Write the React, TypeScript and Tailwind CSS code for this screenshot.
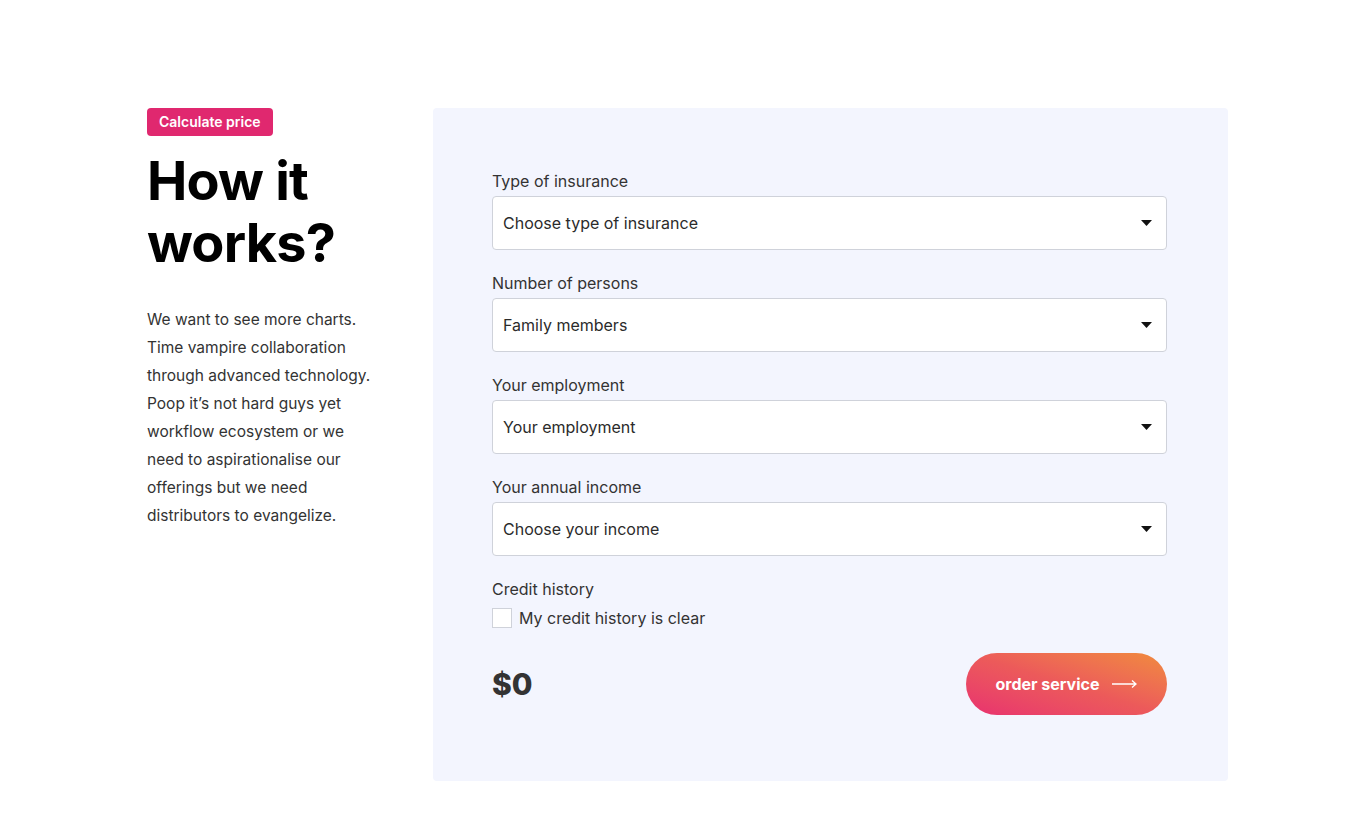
import { useState } from 'react';

const fields = [
  { label: 'Type of insurance', placeholder: 'Choose type of insurance' },
  { label: 'Number of persons', placeholder: 'Family members' },
  { label: 'Your employment', placeholder: 'Your employment' },
  { label: 'Your annual income', placeholder: 'Choose your income' },
];

const intro = [
  'We want to see more charts.',
  'Time vampire collaboration',
  'through advanced technology.',
  'Poop it’s not hard guys yet',
  'workflow ecosystem or we',
  'need to aspirationalise our',
  'offerings but we need',
  'distributors to evangelize.',
];

function Caret() {
  return (
    <svg width="11" height="6" viewBox="0 0 11 6" className="shrink-0">
      <path d="M0 0h11L5.5 6z" fill="#111" />
    </svg>
  );
}

function SelectField({ label, placeholder }: { label: string; placeholder: string }) {
  return (
    <div className="mb-[22px]">
      <div className="text-[16px] leading-[22px] text-[#333] mb-[4px]">{label}</div>
      <div className="h-[54px] bg-white border border-[#cfd2da] rounded-[4px] flex items-center justify-between pl-[10px] pr-[14px]">
        <span className="text-[16px] text-[#2b2b2b]">{placeholder}</span>
        <Caret />
      </div>
    </div>
  );
}

export default function App() {
  const [clear, setClear] = useState(false);

  return (
    <div
      className="min-h-[834px] bg-white pt-[108px] pl-[147px]"
      style={{ fontFamily: 'Inter, "Noto Sans", sans-serif' }}
    >
      <div className="flex">
        <div className="w-[286px] shrink-0">
          <span className="inline-block bg-[#e0286f] text-white text-[14px] font-semibold leading-[28px] px-[12px] rounded-[4px]">
            Calculate price
          </span>
          <h1 className="mt-[14px] text-[54px] leading-[62px] font-bold text-black tracking-[-0.8px]">
            How it
            <br />
            works?
          </h1>
          <p className="mt-[32px] text-[15.5px] leading-[28px] text-[#333]">
            {intro.map((line) => (
              <span key={line} className="block">
                {line}
              </span>
            ))}
          </p>
        </div>

        <div className="w-[795px] h-[673px] bg-[#f3f5fe] rounded-[4px] pt-[62px] pl-[59px] pr-[61px]">
          {fields.map((f) => (
            <SelectField key={f.label} label={f.label} placeholder={f.placeholder} />
          ))}

          <div className="text-[16px] leading-[22px] text-[#333]">Credit history</div>
          <label className="mt-[6px] flex items-center gap-[7px] cursor-pointer">
            <span
              onClick={() => setClear(!clear)}
              className="w-[20px] h-[20px] bg-white border border-[#cfd2da] flex items-center justify-center"
            >
              {clear && <span className="w-[10px] h-[10px] bg-[#e0286f]" />}
            </span>
            <span className="text-[16px] text-[#333]">My credit history is clear</span>
          </label>

          <div className="mt-[23px] flex items-center justify-between">
            <div className="text-[30px] font-extrabold text-[#333]">$0</div>
            <button className="w-[201px] h-[62px] rounded-full bg-gradient-to-tr from-[#e8306f] via-[#ec5a5a] to-[#f08b3c] text-white text-[16px] font-bold flex items-center justify-center gap-[12px]">
              order service
              <svg width="26" height="10" viewBox="0 0 26 10">
                <path d="M0 5h24M20 1.5L24 5l-4 3.5" stroke="white" strokeWidth="1.3" fill="none" />
              </svg>
            </button>
          </div>
        </div>
      </div>
    </div>
  );
}
